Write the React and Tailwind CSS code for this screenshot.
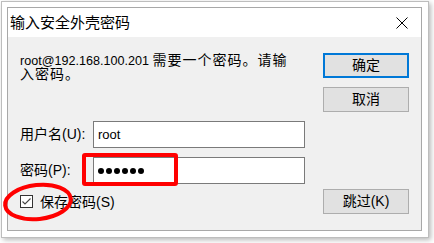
import React from 'react'

const cjk = { fontFamily: '"Liberation Sans", "Noto Sans CJK SC", sans-serif' }

function Btn({ children, primary }) {
  return (
    <div
      className={`w-[86px] h-[25px] flex items-center justify-center bg-[#e1e1e1] text-[14px] text-black ${primary ? 'border-2 border-[#0078d7]' : 'border border-[#adadad]'}`}
    >
      {children}
    </div>
  )
}

function Field({ children, width = 'w-[212px]' }) {
  return (
    <div className={`${width} h-[27px] bg-white border border-[#7a7a7a] flex items-center pl-[4px]`}>
      {children}
    </div>
  )
}

export default function App() {
  return (
    <div className="relative w-[434px] h-[243px] bg-white overflow-hidden pt-[1px] pl-[1px]" style={cjk}>
      {/* outer frame */}
      <div className="w-[428px] h-[237px] border border-[#bdbdbd] p-[5px] shadow-[2px_2px_5px_rgba(0,0,0,0.28)] bg-white">
        {/* dialog */}
        <div className="w-[415px] h-[224px] border border-[#a8a8a8] flex flex-col">
          <div className="h-[29px] bg-white flex items-center justify-between pl-[2px]">
            <span className="text-[15px] text-black leading-none">输入安全外壳密码</span>
            <svg width="12" height="12" viewBox="0 0 12 12" className="mr-[13px]">
              <path d="M0.5 0.5 L11.5 11.5 M11.5 0.5 L0.5 11.5" stroke="#000" strokeWidth="1" fill="none" />
            </svg>
          </div>
          <div className="flex-1 bg-[#f0f0f0] flex">
            {/* left column */}
            <div className="w-[315px] pl-[12px] pt-[16px] flex flex-col">
              <div className="text-black leading-[14px] h-[14px] whitespace-nowrap">
                <span className="text-[12.6px]">root@192.168.100.201 </span>
                <span className="text-[14px] tracking-[1px]">需要一个密码。请输</span>
              </div>
              <div className="text-black leading-[14px] h-[14px] text-[14px] tracking-[1px]">入密码。</div>
              <div className="mt-[40px] flex items-center">
                <span className="w-[73px] text-[14px] text-black">用户名(U):</span>
                <Field>
                  <span className="text-[13px] text-black" style={{ fontFamily: '"Liberation Sans", sans-serif' }}>root</span>
                </Field>
              </div>
              <div className="mt-[9px] flex items-center">
                <span className="w-[73px] text-[14px] text-black">密码(P):</span>
                <Field>
                  <div className="flex gap-[2px]">
                    {[0, 1, 2, 3, 4, 5].map(i => (
                      <span key={i} className="w-[6px] h-[6px] rounded-full bg-black" />
                    ))}
                  </div>
                </Field>
              </div>
              <div className="mt-[11px] flex items-center h-[13px]">
                <div className="w-[13px] h-[13px] border border-[#333333] bg-white flex items-center justify-center">
                  <svg width="11" height="11" viewBox="0 0 11 11">
                    <path d="M1.5 5.5 L4 8 L9.5 2.5" stroke="#444" strokeWidth="1.1" fill="none" />
                  </svg>
                </div>
                <span className="ml-[7px] text-[14px] text-black leading-none">保存密码(S)</span>
              </div>
            </div>
            {/* right column */}
            <div className="pt-[16px] flex flex-col">
              <Btn primary>确定</Btn>
              <div className="mt-[9px]"><Btn>取消</Btn></div>
              <div className="mt-[77px]"><Btn>跳过(K)</Btn></div>
            </div>
          </div>
        </div>
      </div>

      {/* red annotations */}
      <div className="absolute left-[82px] top-[153px] w-[96px] h-[33px] border-4 border-[#ff0000] rounded-[3px]" />
      <svg className="absolute left-0 top-[180px]" width="80" height="46" viewBox="0 0 80 46">
        <ellipse cx="38" cy="22" rx="33" ry="17" transform="rotate(-6 38 22)" stroke="#ff0000" strokeWidth="4" fill="none" />
      </svg>
    </div>
  )
}
